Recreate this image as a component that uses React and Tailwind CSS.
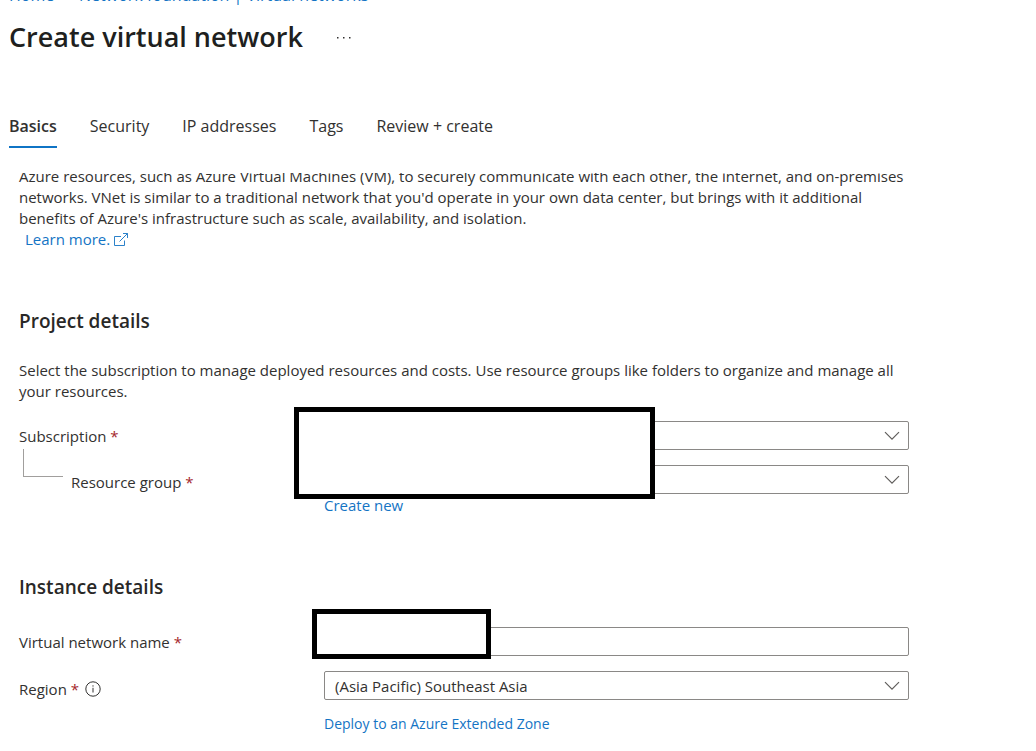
import React from "react";

const control =
  "block h-[29px] w-full appearance-none rounded-xs border border-[#8a8886] bg-white px-2.5 text-[15px] leading-5 text-[#323130] outline-none";

function Required() {
  return <span className="text-[#a4262c]"> *</span>;
}

function Dropdown({ id, options }) {
  return (
    <div className="relative">
      <select id={id} className={control}>
        {options.map((o) => (
          <option key={o}>{o}</option>
        ))}
      </select>
      <svg
        className="pointer-events-none absolute top-2.5 right-[9px] h-2.5 w-4"
        viewBox="0 0 16 10"
        fill="none"
        stroke="#605e5c"
        strokeWidth="1.2"
        aria-hidden="true"
      >
        <path d="M1 1.2 L8 8.2 L15 1.2" />
      </svg>
    </div>
  );
}

function Tab({ children, active }) {
  return (
    <button
      type="button"
      role="tab"
      aria-selected={!!active}
      className={
        active
          ? "h-11 border-b-2 border-[#0f74c5] pt-0.5 text-base font-semibold text-[#323130]"
          : "h-11 border-b-2 border-transparent pt-0.5 text-base text-[#323130]"
      }
    >
      {children}
    </button>
  );
}

const row = "grid grid-cols-[305px_minmax(0,1fr)]";
const link = "text-[#1474c4]";
const heading = "text-[19px] leading-6 font-semibold text-[#292827]";

export default function App() {
  return (
    <main className="overflow-hidden bg-white pb-4 font-['Open_Sans','Noto_Sans',sans-serif] text-[15px] leading-[21px] text-[#323130]">
      <div className="flex h-1.5 items-end overflow-hidden pl-[9px]">
        <nav aria-label="Breadcrumb" className="flex gap-2.5 text-base leading-[21px] whitespace-nowrap">
          <a href="#home" className={link}>Home</a>
          <span>›</span>
          <a href="#networks" className={link}>Network foundation | Virtual networks</a>
          <span>›</span>
        </nav>
      </div>

      <header className="flex items-center gap-8 pt-[11px] pl-[9px]">
        <h1 className="text-[27px] leading-10 font-semibold text-[#201f1e]">Create virtual network</h1>
        <button type="button" aria-label="More actions">
          <svg className="h-4 w-4" viewBox="0 0 16 16" fill="#323130" aria-hidden="true">
            <rect x="2" y="8" width="1.5" height="1.5" />
            <rect x="8" y="8" width="1.5" height="1.5" />
            <rect x="14" y="8" width="1.5" height="1.5" />
          </svg>
        </button>
      </header>

      <div role="tablist" className="mt-[47px] flex gap-[33px] pl-[9px]">
        <Tab active>Basics</Tab>
        <Tab>Security</Tab>
        <Tab>IP addresses</Tab>
        <Tab>Tags</Tab>
        <Tab>Review + create</Tab>
      </div>

      <div className="mt-[25px] overflow-hidden px-[19px]">
        <div className="-mt-[7px] max-w-[890px]">
          <p className="whitespace-nowrap">
            Azure resources, such as Azure Virtual Machines (VM), to securely communicate with each other, the internet, and on-premises
            <br />
            networks. VNet is similar to a traditional network that you'd operate in your own data center, but brings with it additional
            <br />
            benefits of Azure's infrastructure such as scale, availability, and isolation.
          </p>
          <a href="#learn" className="ml-1.5 inline-flex items-center gap-1 text-[#1474c4]">
            Learn more.
            <svg className="h-3.5 w-3.5" viewBox="0 0 14 14" fill="none" stroke="currentColor" strokeWidth="0.9" aria-hidden="true">
              <path d="M7 3.5H.5v9h10V7.5M9 .5h4.5V5M13.5 .5L5.5 8.5" />
            </svg>
          </a>

          <section>
            <h2 className={heading + " mt-[59px]"}>Project details</h2>
            <p className="mt-[27px] whitespace-nowrap">
              Select the subscription to manage deployed resources and costs. Use resource groups like folders to organize and manage all
              <br />
              your resources.
            </p>

            <div className="relative mt-[19px]">
              <div className={row}>
                <label htmlFor="subscription" className="pt-[5px]">
                  Subscription<Required />
                </label>
                <Dropdown id="subscription" options={[""]} />
              </div>
              <div className={row + " mt-[15px]"}>
                <div className="flex items-start gap-2">
                  <span className="-mt-4 ml-1 h-7 w-10 border-b border-l border-[#a19f9d]" />
                  <label htmlFor="group" className="mt-[7px]">
                    Resource group<Required />
                  </label>
                </div>
                <div>
                  <Dropdown id="group" options={[""]} />
                  <button type="button" className="mt-px block text-[#1474c4]">Create new</button>
                </div>
              </div>
              <div className="absolute -top-3.5 left-[275px] h-[92px] w-[361px] border-5 border-black bg-white" />
            </div>
          </section>

          <section>
            <h2 className={heading + " mt-[59px]"}>Instance details</h2>
            <div className="relative mt-7">
              <div className={row}>
                <label htmlFor="name" className="pt-[5px]">
                  Virtual network name<Required />
                </label>
                <input id="name" type="text" className={control} />
              </div>
              <div className="absolute -top-[18px] left-[293px] h-[50px] w-[179px] border-5 border-black bg-white" />
            </div>
            <div className={row + " mt-[15px]"}>
              <div className="flex items-center gap-1.5 pt-[7px]">
                <label htmlFor="region">
                  Region<Required />
                </label>
                <svg className="h-4 w-4" viewBox="0 0 16 16" fill="none" stroke="#323130" aria-hidden="true">
                  <circle cx="8" cy="8" r="7.2" />
                  <path d="M8 6.8v4.7M8 4.3v1.3" />
                </svg>
              </div>
              <Dropdown id="region" options={["(Asia Pacific) Southeast Asia"]} />
            </div>
            <a href="#zone" className="mt-3 ml-[305px] inline-block text-sm leading-6 text-[#1474c4]">
              Deploy to an Azure Extended Zone
            </a>
          </section>
        </div>
      </div>
    </main>
  );
}
